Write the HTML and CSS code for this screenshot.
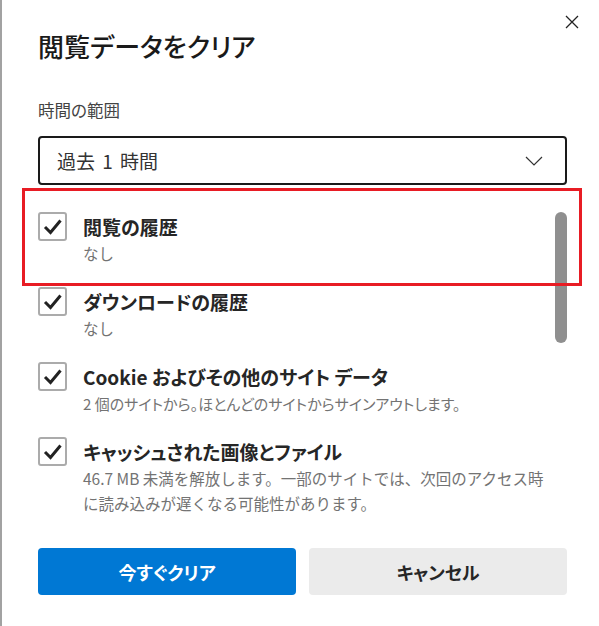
FILE: index.html
```html
<!DOCTYPE html>
<html lang="ja">
<head>
<meta charset="utf-8">
<title>閲覧データをクリア</title>
<link rel="stylesheet" href="styles.css">
</head>
<body>
<div class="strip"></div>
<div class="dialog">
  <h1 class="title">閲覧データをクリア</h1>
  <button class="close" aria-label="閉じる">
    <svg width="14" height="14" viewBox="0 0 14 14"><path d="M1 1L13 13M13 1L1 13" stroke="#222" stroke-width="1.3" fill="none"/></svg>
  </button>
  <div class="field-label">時間の範囲</div>
  <div class="select">
    <span>過去 1 時間</span>
    <svg width="18" height="10" viewBox="0 0 18 10"><path d="M1 1L9 9L17 1" stroke="#333" stroke-width="1.2" fill="none"/></svg>
  </div>
  <div class="list">
    <div class="items">
      <div class="item">
        <span class="cb"><svg width="25" height="25" viewBox="0 0 25 25"><path d="M5 13L10.5 18.5L20.5 6.5" stroke="#222" stroke-width="3" fill="none"/></svg></span>
        <div class="texts"><div class="label">閲覧の履歴</div><div class="sub">なし</div></div>
      </div>
      <div class="item">
        <span class="cb"><svg width="25" height="25" viewBox="0 0 25 25"><path d="M5 13L10.5 18.5L20.5 6.5" stroke="#222" stroke-width="3" fill="none"/></svg></span>
        <div class="texts"><div class="label">ダウンロードの履歴</div><div class="sub">なし</div></div>
      </div>
      <div class="item">
        <span class="cb"><svg width="25" height="25" viewBox="0 0 25 25"><path d="M5 13L10.5 18.5L20.5 6.5" stroke="#222" stroke-width="3" fill="none"/></svg></span>
        <div class="texts"><div class="label">Cookie およびその他のサイト データ</div><div class="sub compact">2 個のサイトから。ほとんどのサイトからサインアウトします。</div></div>
      </div>
      <div class="item">
        <span class="cb"><svg width="25" height="25" viewBox="0 0 25 25"><path d="M5 13L10.5 18.5L20.5 6.5" stroke="#222" stroke-width="3" fill="none"/></svg></span>
        <div class="texts"><div class="label">キャッシュされた画像とファイル</div><div class="sub">46.7 MB 未満を解放します。一部のサイトでは、次回のアクセス時<br>に読み込みが遅くなる可能性があります。</div></div>
      </div>
    </div>
    <div class="track"><div class="thumb"></div></div>
  </div>
  <div class="footer">
    <button class="btn primary">今すぐクリア</button>
    <button class="btn secondary">キャンセル</button>
  </div>
  <div class="highlight"></div>
</div>
</body>
</html>
```

FILE: styles.css
```css
html, body {
  margin: 0;
  padding: 0;
  background: #ffffff;
}
body {
  display: flex;
  width: 599px;
  height: 626px;
  overflow: hidden;
  font-family: "Noto Sans CJK JP", "Noto Sans", sans-serif;
  font-feature-settings: "palt";
  color: #1b1b1b;
}
.strip {
  width: 2px;
  flex: none;
  background: #a2a2a2;
}
.dialog {
  position: relative;
  flex: 1;
  padding: 28px 32px 0 36px;
  display: flex;
  flex-direction: column;
}
.title {
  margin: 0;
  font-size: 26px;
  line-height: 36px;
  font-weight: 500;
  color: #1a1a1a;
}
.close {
  position: absolute;
  top: 14px;
  right: 19px;
  width: 16px;
  height: 16px;
  padding: 0;
  border: 0;
  background: transparent;
  display: flex;
  align-items: center;
  justify-content: center;
}
.field-label {
  margin-top: 34px;
  font-size: 16.5px;
  line-height: 24px;
  color: #444;
}
.select {
  margin-top: 14px;
  height: 49px;
  box-sizing: border-box;
  border: 2px solid #1a1a1a;
  border-radius: 4px;
  display: flex;
  align-items: center;
  justify-content: space-between;
  padding: 0 22px 0 17px;
  font-size: 19px;
  word-spacing: 3px;
  font-feature-settings: normal;
  color: #333;
}
.list {
  display: flex;
  height: 343px;
}
.items {
  flex: 1;
  padding-top: 27px;
  display: flex;
  flex-direction: column;
  gap: 21px;
}
.item {
  display: flex;
  gap: 16px;
  align-items: flex-start;
}
.cb {
  flex: none;
  width: 29px;
  height: 29px;
  box-sizing: border-box;
  border: 2px solid #ababab;
  border-radius: 3px;
  display: flex;
  align-items: center;
  justify-content: center;
}
.label {
  font-size: 19px;
  line-height: 29px;
  font-weight: 700;
  color: #262626;
}
.sub {
  font-size: 15.5px;
  line-height: 25px;
  color: #737373;
  font-feature-settings: normal;
}
.sub.compact {
  font-size: 15px;
  font-feature-settings: "palt";
}
.track {
  width: 12px;
  flex: none;
  padding-top: 27px;
}
.thumb {
  width: 12px;
  height: 131px;
  border-radius: 6px;
  background: #8f8f8f;
}
.footer {
  margin-top: 20px;
  display: flex;
  gap: 13px;
}
.btn {
  flex: 1;
  height: 47px;
  border: 0;
  border-radius: 4px;
  font-family: inherit;
  font-feature-settings: "palt";
  font-size: 18px;
  font-weight: 700;
}
.primary {
  background: #0078d4;
  color: #ffffff;
}
.secondary {
  background: #ebebeb;
  color: #262626;
}
.highlight {
  position: absolute;
  left: 20px;
  top: 188px;
  width: 560px;
  height: 98px;
  box-sizing: border-box;
  border: 3px solid #e81c24;
}
```
